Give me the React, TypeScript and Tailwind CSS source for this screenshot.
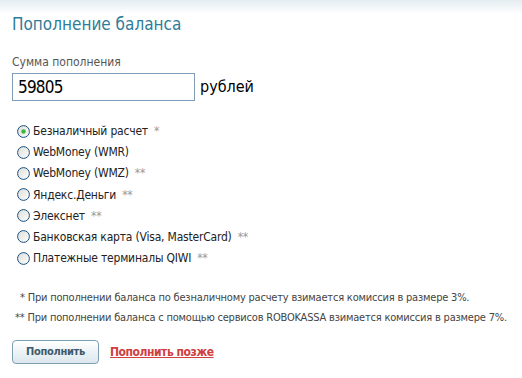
import { useState } from "react";

const options = [
  { label: "Безналичный расчет", mark: "*" },
  { label: "WebMoney (WMR)", mark: "" },
  { label: "WebMoney (WMZ)", mark: "**" },
  { label: "Яндекс.Деньги", mark: "**" },
  { label: "Элекснет", mark: "**" },
  { label: "Банковская карта (Visa, MasterCard)", mark: "**" },
  { label: "Платежные терминалы QIWI", mark: "**" },
];

const Radio = ({ checked }: { checked: boolean }) => (
  <svg width="13" height="13" viewBox="0 0 13 13" className="shrink-0">
    <defs>
      <linearGradient id="rg" x1="0" y1="0" x2="1" y2="1">
        <stop offset="0" stopColor="#dcdcd6" />
        <stop offset="1" stopColor="#ffffff" />
      </linearGradient>
    </defs>
    <circle cx="6.5" cy="6.5" r="5.9" fill="url(#rg)" stroke="#1c5180" strokeWidth="1" />
    {checked ? <circle cx="6.5" cy="6.5" r="2.2" fill="#3fb43f" /> : null}
  </svg>
);

export default function App() {
  const [selected, setSelected] = useState(0);
  return (
    <div className="h-[378px] w-[522px] bg-[linear-gradient(#e4edf1,#ffffff_14px)] font-['DejaVu_Sans',sans-serif] font-stretch-condensed text-[#333]">
      <div className="flex flex-col px-3 pt-[13px]">
        <h1 className="text-[17px] leading-[22px] text-[#2f7c99]">Пополнение баланса</h1>

        <label className="mt-[20px] text-[12px] leading-[14px] text-[#555]">Сумма пополнения</label>
        <div className="mt-[4px] flex items-center gap-[5px]">
          <input
            className="h-[28px] w-[183px] border border-[#7f9db9] px-[5px] text-[17px] tracking-[-0.8px] text-black outline-none"
            defaultValue="59805"
          />
          <span className="text-[16px] text-black">рублей</span>
        </div>

        <div className="mt-[23px] flex flex-col gap-[7.2px] pl-[5px]">
          {options.map((o, i) => (
            <label
              className="flex h-[14px] items-center gap-[3px] text-[12px] tracking-[-0.2px] text-[#222]"
              key={o.label}
              onClick={() => setSelected(i)}
            >
              <Radio checked={selected === i} />
              <span>
                {o.label}
                {o.mark ? <span className="ml-[6px] text-[#999]">{o.mark}</span> : null}
              </span>
            </label>
          ))}
        </div>

        <div className="mt-[25px] flex flex-col gap-[5px] whitespace-nowrap text-[11px] leading-[15px] tracking-[-0.2px] text-[#444]">
          <p className="pl-[8px]">* При пополнении баланса по безналичному расчету взимается комиссия в размере 3%.</p>
          <p className="pl-[3px]">** При пополнении баланса с помощью сервисов ROBOKASSA взимается комиссия в размере 7%.</p>
        </div>

        <div className="mt-[15px] flex items-center gap-[11px]">
          <button
            className="h-[24px] w-[87px] rounded-[4px] border border-[#7e9fb0] bg-[linear-gradient(#ffffff,#dbe7ed)] text-[11px] font-bold tracking-[-0.3px] text-[#3d5a6a]"
            type="button"
          >
            Пополнить
          </button>
          <a className="text-[12px] font-bold tracking-[-0.45px] text-[#d04040] underline" href="#">
            Пополнить позже
          </a>
        </div>
      </div>
    </div>
  );
}
